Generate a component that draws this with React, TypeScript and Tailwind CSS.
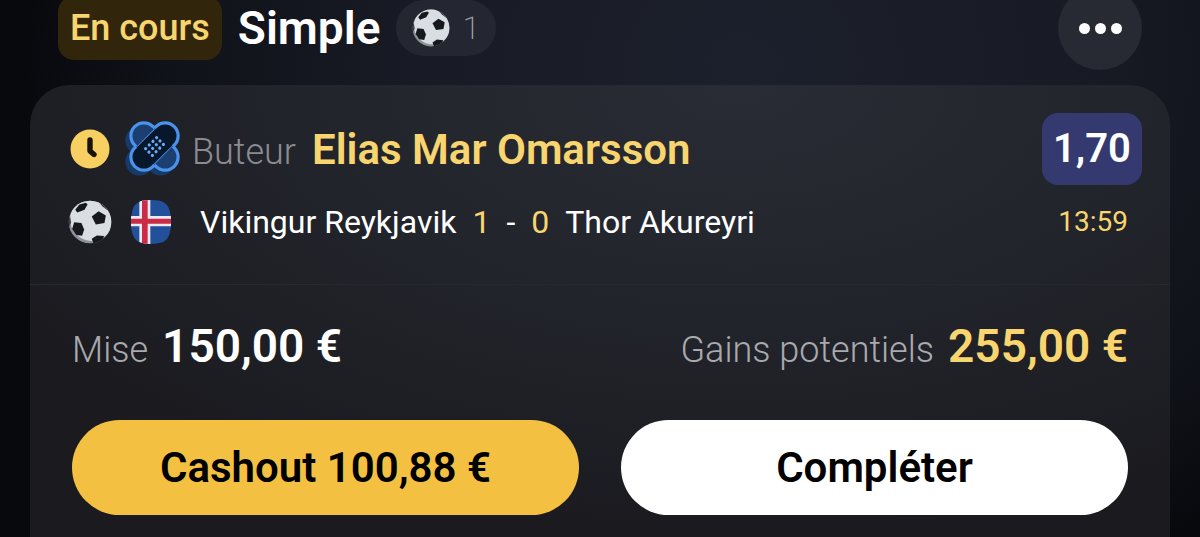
function Football({ className }: { className?: string }) {
  return (
    <svg viewBox="0 0 126 128" className={className} aria-hidden="true">
      <defs>
        <clipPath id="ball">
          <circle cx="63" cy="64" r="62" />
        </clipPath>
      </defs>
      <g clipPath="url(#ball)">
        <rect width="126" height="128" fill="#8d929a" />
        <circle cx="68" cy="56" r="63" fill="#d9dee3" />
        <path d="M68 48 L88 33 L109 45 L105 67 L80 71 Z" fill="#17181c" />
        <path d="M17 65 L38 67 L46 86 L40 104 L23 102 L11 84 Z" fill="#17181c" />
        <path d="M20 28 L32 13 L51 8 L56 13 L47 28 L26 36 Z" fill="#17181c" />
        <path d="M68 113 L83 103 L104 105 L98 120 L74 128 Z" fill="#17181c" />
        <path d="M88 6 L104 10 L118 28 L112 28 L99 18 Z" fill="#24262b" />
        <path d="M0 52 L5 48 L8 66 L2 78 Z" fill="#3b3e44" />
      </g>
    </svg>
  );
}

function Clock() {
  return (
    <svg viewBox="0 0 40 40" className="size-10 shrink-0" aria-hidden="true">
      <circle cx="20" cy="20" r="19.5" fill="#f8d062" />
      <path
        d="M20 11 V22 L24 25.5"
        fill="none"
        stroke="#17130a"
        strokeWidth="5.4"
        strokeLinecap="round"
        strokeLinejoin="round"
      />
    </svg>
  );
}

function Bandage() {
  const dots = [-7.8, -2.6, 2.6, 7.8];
  const rows = [-4.8, 0, 4.8];
  return (
    <svg viewBox="0 0 58 56" className="h-14 w-[58px] shrink-0" aria-hidden="true">
      <g fill="#183a68">
        <rect x="-29" y="-14" width="58" height="28" rx="14" transform="translate(26 30) rotate(45)" />
        <rect x="-29" y="-14" width="58" height="28" rx="14" transform="translate(26 30) rotate(-45)" />
      </g>
      <rect
        x="-28" y="-13" width="56" height="26" rx="13"
        transform="translate(30.5 25.5) rotate(45)"
        fill="#1b3f70" stroke="#4a92ec" strokeWidth="3.2"
      />
      <g transform="translate(30.5 25.5) rotate(-45)">
        <rect x="-28" y="-13" width="56" height="26" rx="13" fill="#07172c" />
        <path
          d="M-13 -13 H-15 A13 13 0 0 0 -15 13 H-13 M13 -13 H15 A13 13 0 0 1 15 13 H13"
          fill="none" stroke="#4a92ec" strokeWidth="3.2"
        />
        <path d="M-13 -12.3 H13 M-13 12.3 H13" stroke="#4a92ec" strokeWidth="1" />
        {dots.map((x) => rows.map((y) => <circle key={`${x},${y}`} cx={x} cy={y} r="1.6" fill="#6aaaf5" />))}
      </g>
    </svg>
  );
}

function IcelandFlag() {
  return (
    <svg viewBox="0 0 122 132" className="h-11 w-[42px] shrink-0" role="img" aria-label="Islande">
      <defs>
        <clipPath id="flag">
          <path d="M61 0 C96 0 111 9 117 32 Q122 48 122 66 Q122 84 117 100 C111 123 96 132 61 132 C26 132 11 123 5 100 Q0 84 0 66 Q0 48 5 32 C11 9 26 0 61 0 Z" />
        </clipPath>
      </defs>
      <g clipPath="url(#flag)">
        <rect width="122" height="132" fill="#22509a" />
        <path d="M26 0 H59 V132 H26 Z M0 48 H122 V79 H0 Z" fill="#e9ebf3" />
        <path d="M34 0 H51 V132 H34 Z M0 56 H122 V71 H0 Z" fill="#cb2b45" />
      </g>
    </svg>
  );
}

export default function App() {
  return (
    <main className="flex min-h-screen flex-col overflow-hidden bg-[radial-gradient(ellipse_60%_110%_at_62%_12%,#1c202c_0%,#181b25_45%,#101219_80%,#08090d_100%)] px-[30px] font-[Roboto,sans-serif] text-white">
      <header className="-mt-3.5 mb-[15px] flex h-[84px] items-center px-7">
        <span className="flex h-16 items-center rounded-2xl bg-[#31260b] px-3 text-[36px] font-medium text-[#f8d56e]">
          En cours
        </span>
        <h1 className="ml-4 text-[46px] font-semibold">Simple</h1>
        <div className="ml-4 flex h-14 items-center gap-3 rounded-full bg-[#242731] px-4 text-[32px] font-extralight text-[#a2a4aa]">
          <Football className="size-[38px]" />
          1
        </div>
        <button
          type="button"
          aria-label="Options"
          className="ml-auto flex size-[84px] items-center justify-center gap-[5px] rounded-full bg-[#272a33]"
        >
          <span className="size-[11px] rounded-full bg-white" />
          <span className="size-[11px] rounded-full bg-white" />
          <span className="size-[11px] rounded-full bg-white" />
        </button>
      </header>

      <section className="flex-1 rounded-t-[40px] bg-[radial-gradient(ellipse_75%_100%_at_62%_0%,#292c34_0%,#23252d_45%,#1e1f24_80%,#1a1a1f_100%)]">
        <div className="flex h-[200px] flex-col gap-3 border-b border-[#262932] pl-10 pr-7 pt-7">
          <div className="flex h-[72px] items-center">
            <Clock />
            <div className="ml-3.5">
              <Bandage />
            </div>
            <p className="ml-2.5 flex items-baseline gap-4">
              <span className="text-[36px] font-light text-[#8b8c92]">Buteur</span>
              <strong className="text-[42px] font-semibold text-[#f8d56e]">Elias Mar Omarsson</strong>
            </p>
            <span className="ml-auto flex h-[72px] w-[100px] items-center justify-center rounded-2xl bg-[#343a70] text-[40px] font-semibold">
              1,70
            </span>
          </div>
          <div className="flex h-[50px] items-center pr-3.5 text-[32px]">
            <Football className="-ml-0.5 size-11" />
            <div className="ml-[18px]">
              <IcelandFlag />
            </div>
            <p className="ml-7 flex items-baseline gap-4">
              <span>Vikingur Reykjavik</span>
              <span className="text-[#f8d56e]">1</span>
              <span>-</span>
              <span className="text-[#f8d56e]">0</span>
              <span>Thor Akureyri</span>
            </p>
            <time className="ml-auto text-[28px] text-[#f8d56e]">13:59</time>
          </div>
        </div>

        <div className="flex h-[123px] items-center justify-between px-[42px]">
          <p className="flex items-baseline gap-3.5">
            <span className="text-[36px] font-light text-[#a9aaae]">Mise</span>
            <strong className="text-[46px] font-semibold">150,00 €</strong>
          </p>
          <p className="flex items-baseline gap-3.5">
            <span className="text-[36px] font-light text-[#a9aaae]">Gains potentiels</span>
            <strong className="text-[46px] font-semibold text-[#f8d56e]">255,00 €</strong>
          </p>
        </div>

        <div className="flex gap-[42px] px-[42px] pb-[22px] pt-3 text-[42px] font-semibold text-black">
          <button type="button" className="h-[95px] flex-1 rounded-full bg-[#f4c042]">
            Cashout 100,88 €
          </button>
          <button type="button" className="h-[95px] flex-1 rounded-full bg-white">
            Compléter
          </button>
        </div>
      </section>
    </main>
  );
}
